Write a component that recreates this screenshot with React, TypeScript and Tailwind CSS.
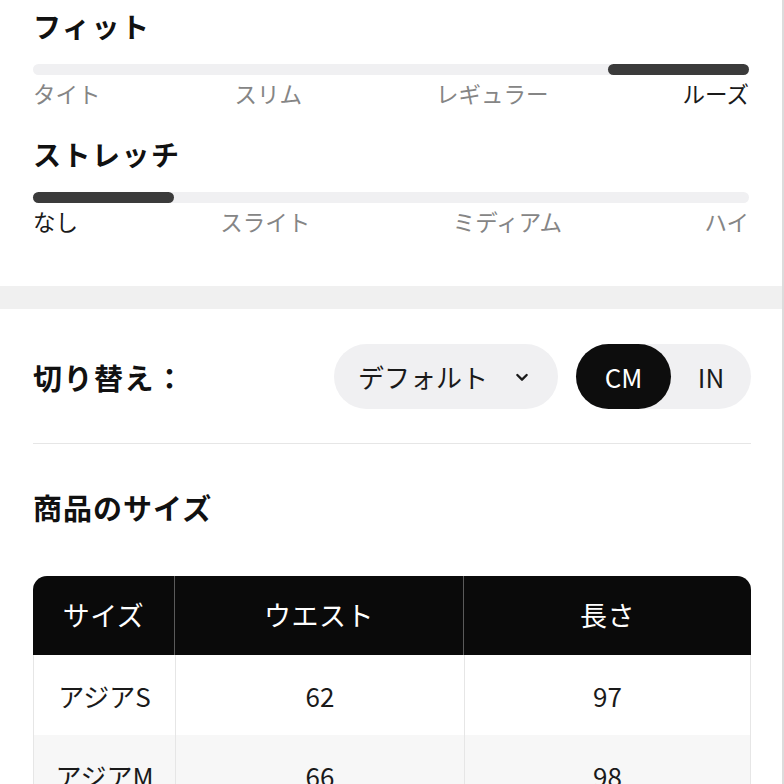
import React from 'react';

const FONT = { fontFamily: '"Noto Sans CJK JP", "Noto Sans", sans-serif' };

interface ScaleProps {
  title: string;
  labels: string[];
  selected: number;
  titleTop: string;
}

const THUMB = 141;

const Scale: React.FC<ScaleProps> = ({ title, labels, selected, titleTop }) => {
  const t = selected / (labels.length - 1);
  return (
    <div className={`px-[33px] ${titleTop}`}>
      <div className="text-[28px] leading-[36px] font-bold tracking-[1.5px] text-[#111]">{title}</div>
      <div className="relative mt-[20px] h-[11px] w-full rounded-full bg-[#f0f0f2]">
        {/* selected segment */}
        <div
          className="absolute top-0 bottom-0 rounded-full bg-[#3b3b3b]"
          style={{ left: `calc(${t * 100}% - ${t * THUMB}px)`, width: THUMB }}
        />
      </div>
      <div className="mt-[3px] flex justify-between text-[22.5px] leading-[30px]">
        {labels.map((l, i) => (
          <span key={l} className={i === selected ? 'text-[#1a1a1a]' : 'text-[#858585]'}>
            {l}
          </span>
        ))}
      </div>
    </div>
  );
};

const rows = [
  { size: 'アジアS', waist: '62', length: '97' },
  { size: 'アジアM', waist: '66', length: '98' },
  { size: 'アジアL', waist: '70', length: '99' },
];

export default function App() {
  return (
    <div className="w-[784px] h-[784px] overflow-hidden bg-white border-r-2 border-[#dcdcdc]" style={FONT}>
      <Scale title="フィット" labels={['タイト', 'スリム', 'レギュラー', 'ルーズ']} selected={3} titleTop="pt-[8px]" />
      <Scale title="ストレッチ" labels={['なし', 'スライト', 'ミディアム', 'ハイ']} selected={0} titleTop="pt-[28px]" />

      {/* section divider band */}
      <div className="mt-[50px] h-[23px] bg-[#f0f0f0]" />

      <div className="pl-[33px] pr-[31px]">
        <div className="mt-[35px] flex h-[65px] items-center justify-between">
          <div className="text-[29px] font-bold tracking-[1.5px] text-[#111] leading-[36px]">切り替え：</div>
          <div className="flex items-center gap-[18px]">
            <button className="flex h-[65px] w-[224px] items-center justify-between rounded-full bg-[#f0f0f2] pl-[24px] pr-[28px] text-[26px] text-[#1a1a1a]">
              <span>デフォルト</span>
              <svg width="16" height="16" viewBox="0 0 24 24" fill="none" stroke="#1a1a1a" strokeWidth="3.5" strokeLinecap="round" strokeLinejoin="round">
                <path d="M5 9l7 7 7-7" />
              </svg>
            </button>
            <div className="flex h-[65px] w-[175px] items-center rounded-full bg-[#f0f0f2]">
              <div className="flex h-full w-[95px] items-center justify-center rounded-full bg-[#0d0d0d] text-[26px] text-white">CM</div>
              <div className="flex h-full flex-1 items-center justify-center text-[26px] text-[#1a1a1a]">IN</div>
            </div>
          </div>
        </div>

        <div className="mt-[34px] h-px bg-[#e6e6e6]" />

        <div className="mt-[45px] text-[29px] font-bold tracking-[1px] leading-[36px] text-[#111]">商品のサイズ</div>

        <div className="mt-[51px] overflow-hidden rounded-t-[14px]">
          <div className="grid grid-cols-[141px_289px_1fr] h-[79px] bg-[#0a0a0a] text-[27px] tracking-[0.5px] text-white">
            <div className="flex items-center justify-center">サイズ</div>
            <div className="flex items-center justify-center border-l border-[#5a5a5a]">ウエスト</div>
            <div className="flex items-center justify-center border-l border-[#5a5a5a]">長さ</div>
          </div>
          {rows.map((r, i) => (
            <div
              key={r.size}
              className={`grid grid-cols-[141px_289px_1fr] h-[80px] text-[26px] text-[#1a1a1a] border-x border-[#e6e6e6] ${i % 2 === 1 ? 'bg-[#f7f7f7]' : 'bg-white'}`}
            >
              <div className="flex items-center justify-center">{r.size}</div>
              <div className="flex items-center justify-center border-l border-[#e6e6e6]">{r.waist}</div>
              <div className="flex items-center justify-center border-l border-[#e6e6e6]">{r.length}</div>
            </div>
          ))}
        </div>
      </div>
    </div>
  );
}
